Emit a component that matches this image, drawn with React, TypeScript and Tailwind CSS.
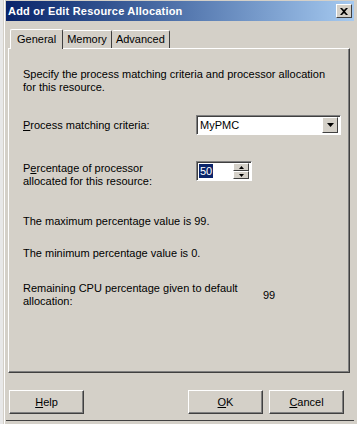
import React from 'react';

const font = { fontFamily: '"Liberation Sans", Arial, sans-serif' };

function U({ children }: { children: React.ReactNode }) {
  return <span className="underline underline-offset-1">{children}</span>;
}

function Button({ children, className = '' }: { children: React.ReactNode; className?: string }) {
  return (
    <div
      className={`h-[24px] w-[75px] flex items-center justify-center text-[11px] text-black border border-t-white border-l-white border-r-[#404040] border-b-[#404040] shadow-[inset_-1px_-1px_0_#808080] ${className}`}
    >
      {children}
    </div>
  );
}

export default function App() {
  return (
    <div className="w-[357px] h-[424px] bg-[#d4d0c8] flex overflow-hidden" style={font}>
      <div className="w-[3px] shrink-0 bg-[#e8e8e8]" />
      <div className="flex-1 flex flex-col border-l border-l-[#d4d0c8] shadow-[inset_1px_0_0_#ffffff] pl-[2px] pr-[4px]">
        {/* title bar */}
        <div className="h-[20px] mt-[1px] flex items-center justify-between bg-gradient-to-r from-[#0a246a] to-[#a6caf0] pl-[2px] pr-[2px]">
          <span className="text-white font-bold text-[11px] tracking-[0.2px]">Add or Edit Resource Allocation</span>
          <div className="w-[16px] h-[14px] bg-[#d4d0c8] border border-t-white border-l-white border-r-[#404040] border-b-[#404040] flex items-center justify-center">
            <svg width="8" height="7" viewBox="0 0 8 7">
              <path d="M0 0 L2 0 L4 2 L6 0 L8 0 L5 3.5 L8 7 L6 7 L4 5 L2 7 L0 7 L3 3.5 Z" fill="#000" />
            </svg>
          </div>
        </div>

        {/* tabs */}
        <div className="mt-[7px] pl-[2px] pr-[4px] flex flex-col">
          <div className="flex items-end h-[20px] pl-[2px] text-[11px] text-black">
            <div className="h-[20px] px-[6px] flex items-center bg-[#d4d0c8] border-t border-l border-t-white border-l-white border-r border-r-[#404040] relative -mb-px z-10 rounded-t-[2px]">
              General
            </div>
            <div className="h-[18px] px-[4px] flex items-center border-t border-t-white border-r border-r-[#404040] rounded-t-[2px]">
              Memory
            </div>
            <div className="h-[18px] px-[4px] flex items-center border-t border-t-white border-r border-r-[#404040] rounded-t-[2px]">
              Advanced
            </div>
          </div>
          <div className="h-[325px] border border-t-white border-l-white border-r-[#404040] border-b-[#404040] shadow-[inset_-1px_-1px_0_#808080] pl-[14px] pr-[8px] pt-[19px] text-[11px] text-black leading-[13px]">
            <p>Specify the process matching criteria and processor allocation<br />for this resource.</p>

            <div className="mt-[21px] flex items-center">
              <span className="w-[173px]"><U>P</U>rocess matching criteria:</span>
              <div className="w-[145px] h-[20px] bg-white border border-t-[#808080] border-l-[#808080] border-r-white border-b-white shadow-[inset_1px_1px_0_#404040] flex items-center justify-between pl-[3px] pr-[2px]">
                <span>MyPMC</span>
                <div className="w-[16px] h-[16px] bg-[#d4d0c8] border border-t-white border-l-white border-r-[#404040] border-b-[#404040] flex items-center justify-center">
                  <svg width="7" height="4" viewBox="0 0 7 4"><path d="M0 0 H7 L3.5 4 Z" fill="#000" /></svg>
                </div>
              </div>
            </div>

            <div className="mt-[26px] flex items-start">
              <span className="w-[173px] pt-[1px]">P<U>e</U>rcentage of processor<br />allocated for this resource:</span>
              <div className="w-[56px] h-[20px] bg-white border border-t-[#808080] border-l-[#808080] border-r-white border-b-white shadow-[inset_1px_1px_0_#404040] flex items-center justify-between pl-[2px] pr-[2px]">
                <span className="bg-[#0a246a] text-white px-[1px] leading-[14px]">50</span>
                <div className="flex flex-col w-[16px] h-[16px]">
                  <div className="h-[8px] bg-[#d4d0c8] border border-t-white border-l-white border-r-[#404040] border-b-[#404040] flex items-center justify-center">
                    <svg width="5" height="3" viewBox="0 0 5 3"><path d="M2.5 0 L5 3 H0 Z" fill="#000" /></svg>
                  </div>
                  <div className="h-[8px] bg-[#d4d0c8] border border-t-white border-l-white border-r-[#404040] border-b-[#404040] flex items-center justify-center">
                    <svg width="5" height="3" viewBox="0 0 5 3"><path d="M0 0 H5 L2.5 3 Z" fill="#000" /></svg>
                  </div>
                </div>
              </div>
            </div>

            <p className="mt-[27px]">The maximum percentage value is 99.</p>
            <p className="mt-[19px]">The minimum percentage value is 0.</p>

            <div className="mt-[22px] flex items-center">
              <span className="w-[240px]">Remaining CPU percentage given to default<br />allocation:</span>
              <span>99</span>
            </div>
          </div>
        </div>

        {/* buttons */}
        <div className="mt-[17px] pl-[3px] pr-[10px] flex items-center">
          <Button><U>H</U>elp</Button>
          <div className="flex-1" />
          <Button><U>O</U>K</Button>
          <Button className="ml-[6px]"><U>C</U>ancel</Button>
        </div>
        <div className="mt-auto mb-[3px] h-px bg-[#404040]" />
      </div>
    </div>
  );
}
